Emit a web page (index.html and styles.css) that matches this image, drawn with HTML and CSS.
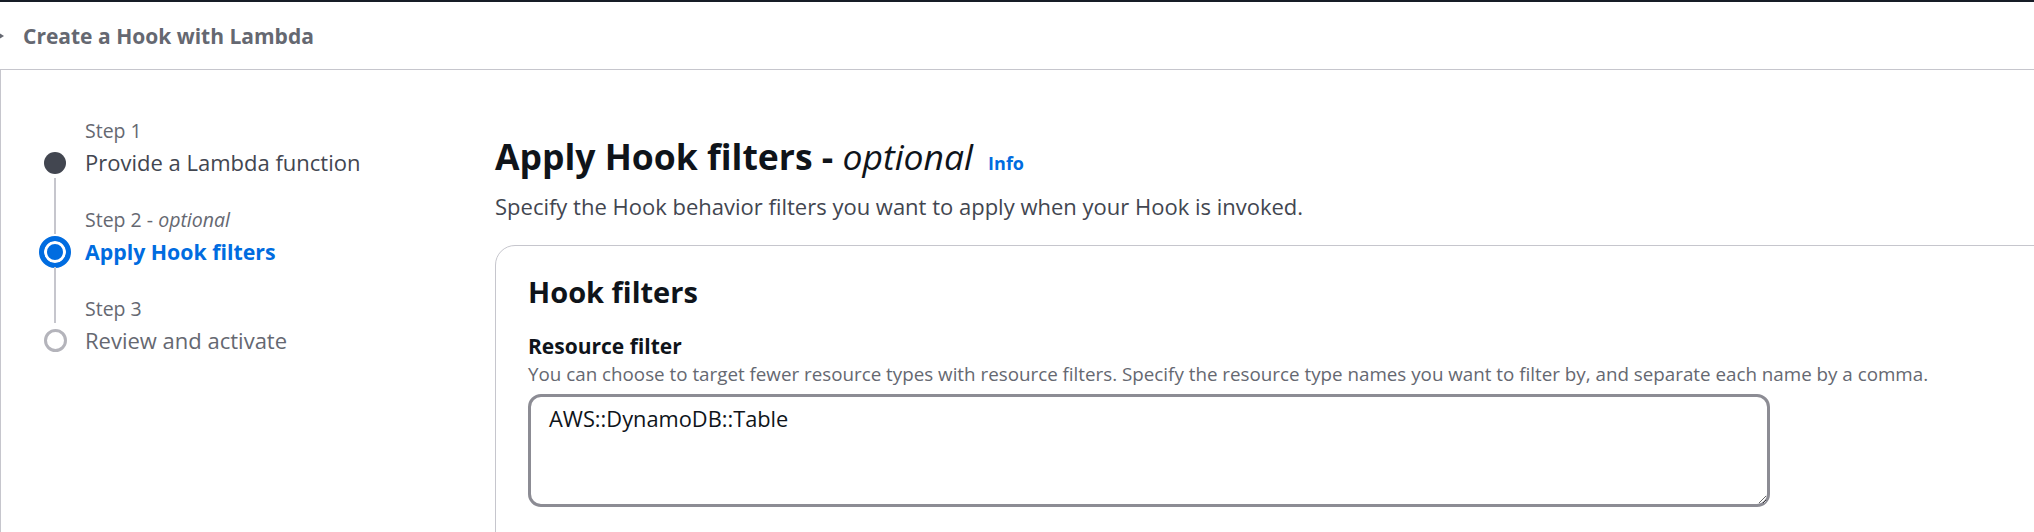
FILE: index.html
```html
<!DOCTYPE html>
<html lang="en">
<head>
<meta charset="utf-8">
<title>Create a Hook with Lambda</title>
<link rel="stylesheet" href="styles.css">
</head>
<body>
<div class="topbar"></div>
<header class="pagehead">
  <svg class="caret" width="4" height="10" viewBox="0 0 4 10" aria-hidden="true"><path d="M-4 0 L4 5 L-4 10 Z" fill="#656871"/></svg>
  <h2 class="pagehead-title">Create a Hook with Lambda</h2>
</header>
<div class="layout">
  <nav class="steps">
    <span class="step-label">Step 1</span>
    <span class="step-icon visited"></span>
    <span class="step-title visited">Provide a Lambda function</span>

    <span class="connector"></span>
    <span class="step-label spaced">Step 2 - <i>optional</i></span>
    <span class="step-icon current"></span>
    <span class="step-title current">Apply Hook filters</span>

    <span class="connector"></span>
    <span class="step-label spaced">Step 3</span>
    <span class="step-icon disabled"></span>
    <span class="step-title disabled">Review and activate</span>
  </nav>
  <main class="content">
    <h1 class="page-title">Apply Hook filters - <i class="opt">optional</i><a class="info" href="#">Info</a></h1>
    <p class="page-desc">Specify the Hook behavior filters you want to apply when your Hook is invoked.</p>
    <section class="card">
      <h2 class="card-title">Hook filters</h2>
      <div class="field-label">Resource filter</div>
      <div class="field-desc">You can choose to target fewer resource types with resource filters. Specify the resource type names you want to filter by, and separate each name by a comma.</div>
      <textarea class="field-input" readonly>AWS::DynamoDB::Table</textarea>
    </section>
  </main>
</div>
</body>
</html>
```
FILE: styles.css
```css
html, body {
  margin: 0;
  padding: 0;
  overflow: hidden;
  background: #ffffff;
}

body {
  width: 2034px;
  height: 532px;
  font-family: "Open Sans", Lato, sans-serif;
  color: #0f141a;
}

.topbar {
  height: 2px;
  background: #161d26;
}

.pagehead {
  height: 67px;
  display: flex;
  align-items: center;
  gap: 19px;
}

.caret {
  flex: none;
}

.pagehead-title {
  margin: 0;
  font-size: 21px;
  line-height: 28px;
  font-weight: 700;
  color: #656871;
}

.layout {
  border-top: 1px solid #c6c6cd;
  border-left: 1px solid #c6c6cd;
  display: grid;
  grid-template-columns: 457px 1600px;
  padding: 47px 0 0 37px;
  height: 600px;
}

/* steps navigation */
.steps {
  display: grid;
  grid-template-columns: 34px 1fr;
  column-gap: 13px;
  align-content: start;
}

.step-label {
  grid-column: 2;
  font-size: 19.5px;
  line-height: 28px;
  color: #656871;
}

.step-label.spaced {
  padding-top: 26px;
}

.step-title {
  grid-column: 2;
  font-size: 22px;
  line-height: 35px;
}

.step-title.visited {
  color: #424650;
}

.step-title.current {
  color: #006ce0;
  font-weight: 700;
  font-size: 21.3px;
}

.step-title.disabled {
  color: #656871;
}

.step-icon {
  grid-column: 1;
  justify-self: center;
  align-self: center;
  box-sizing: border-box;
  border-radius: 50%;
}

.step-icon.visited {
  width: 22px;
  height: 22px;
  background: #424650;
}

.step-icon.current {
  width: 32px;
  height: 32px;
  border: 5px solid #006ce0;
  background: #006ce0;
  box-shadow: inset 0 0 0 3px #ffffff;
}

.step-icon.disabled {
  width: 23px;
  height: 23px;
  border: 3px solid #b4b4bb;
  background: #ffffff;
}

.connector {
  grid-column: 1;
  justify-self: center;
  width: 2px;
  background: #c6c6cd;
  margin-top: -2px;
}

/* main content */
.content {
  padding-top: 17px;
}

.page-title {
  margin: 0;
  font-size: 35.5px;
  line-height: 44px;
  font-weight: 700;
  color: #0f141a;
}

.opt {
  font-weight: 400;
}

.info {
  margin-left: 15px;
  font-size: 18px;
  font-weight: 700;
  color: #006ce0;
  text-decoration: none;
}

.page-desc {
  margin: 6px 0 0;
  font-size: 22px;
  line-height: 30px;
  color: #424650;
}

.card {
  margin-top: 24px;
  border: 1px solid #c6c6cd;
  border-radius: 20px;
  padding: 28px 32px 200px;
}

.card-title {
  margin: 0;
  font-size: 29px;
  line-height: 36px;
  font-weight: 700;
  color: #0f141a;
}

.field-label {
  margin-top: 22px;
  font-size: 21px;
  line-height: 28px;
  font-weight: 700;
  color: #0f141a;
}

.field-desc {
  margin-top: 2px;
  font-size: 18.8px;
  line-height: 24px;
  color: #656871;
  white-space: nowrap;
}

.field-input {
  display: block;
  margin-top: 8px;
  width: 1242px;
  height: 113px;
  box-sizing: border-box;
  border: 3px solid #8c8c94;
  border-radius: 13px;
  padding: 8px 18px;
  font-family: "Open Sans", Lato, sans-serif;
  font-size: 21.8px;
  line-height: 28px;
  color: #0f141a;
  background: #ffffff;
  outline: none;
}
```
